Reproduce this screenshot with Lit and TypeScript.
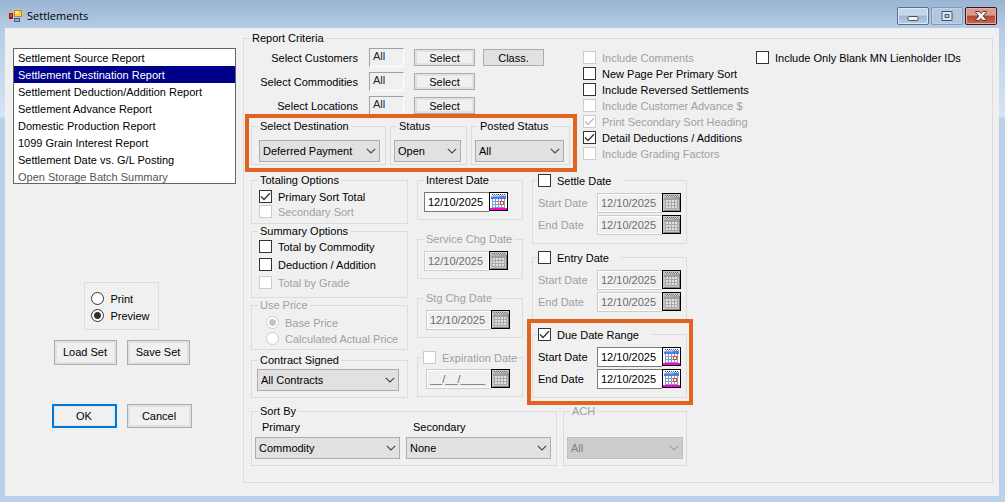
import { LitElement, html, css, svg, nothing } from "lit";
import { customElement, state } from "lit/decorators.js";
import { classMap } from "lit/directives/class-map.js";

interface Option {
  label: string;
  checked?: boolean;
  disabled?: boolean;
}

const REPORTS = [
  "Settlement Source Report",
  "Settlement Destination Report",
  "Settlement Deduction/Addition Report",
  "Settlement Advance Report",
  "Domestic Production Report",
  "1099 Grain Interest Report",
  "Settlement Date vs. G/L Posting",
  "Open Storage Batch Summary",
];

const FLAGS: Option[] = [
  { label: "Include Comments", disabled: true },
  { label: "New Page Per Primary Sort" },
  { label: "Include Reversed Settlements" },
  { label: "Include Customer Advance $", disabled: true },
  { label: "Print Secondary Sort Heading", checked: true, disabled: true },
  { label: "Detail Deductions / Additions", checked: true },
  { label: "Include Grading Factors", disabled: true },
];

const TODAY = "12/10/2025";

@customElement("app-root")
export class AppRoot extends LitElement {
  @state() private report = REPORTS[1];

  static styles = css`
    :host {
      display: block;
      font: 11px/13px "Liberation Sans", Arial, sans-serif;
      color: #000;
    }
    *,
    *::before,
    *::after {
      box-sizing: border-box;
    }
    button,
    input,
    select {
      font: inherit;
      color: inherit;
      margin: 0;
      border-radius: 0;
    }
    .window {
      min-height: 100vh;
      display: flex;
      flex-direction: column;
      padding: 0 6px 6px 5px;
      background: linear-gradient(#99b4d1 0, #b4cce6 28px, #d6e4f3 116px, #b9d1ea 119px);
    }
    .titlebar {
      height: 28px;
      display: flex;
      align-items: center;
      gap: 4px;
      padding: 4px 2px 0 4px;
    }
    .titlebar h1 {
      flex: 1;
      margin: 0;
      font: 11px/16px "Open Sans", "Noto Sans", sans-serif;
    }
    .titlebar svg {
      display: block;
    }
    .caption-buttons {
      display: flex;
      gap: 2px;
    }
    .caption {
      width: 32px;
      height: 18px;
      padding: 0;
      display: grid;
      place-items: center;
      border: 1px solid #57708c;
      border-radius: 2px;
      background: linear-gradient(#c3d6ea 45%, #9db8d4 50%, #b5cde6);
      box-shadow: inset 0 0 0 1px #dce9f6;
    }
    .caption.dim {
      border-color: #8199b5;
      background: #b0c7e0;
      box-shadow: inset 0 0 0 1px #c0d3e8;
    }
    .caption.close {
      border-color: #43131b;
      background: linear-gradient(#d99a8c 45%, #b8432c 50%, #cb6a4f);
      box-shadow: inset 0 0 0 1px #e3b1a6;
    }
    .client {
      flex: 1;
      display: grid;
      grid-template-columns: 223px 1fr;
      align-items: start;
      gap: 7px;
      padding: 4px 6px 12px 8px;
      background: #f0f0f0;
    }
    .side {
      display: flex;
      flex-direction: column;
      align-items: center;
      padding: 16px 6px 0 0;
    }
    .reports {
      width: 223px;
      height: 136px;
      align-self: flex-start;
      padding: 0;
      border: 1px solid #646464;
      background: #fff;
      overflow: hidden;
      outline: none;
      scrollbar-width: none;
    }
    .reports option {
      height: 17px;
      padding: 3px 4px 0;
    }
    .reports option:last-child {
      color: #555;
    }
    .reports option:checked {
      color: #fff;
      background: #00008b linear-gradient(#00008b, #00008b);
    }
    .output {
      margin-top: 98px;
    }
    .output .body {
      display: flex;
      flex-direction: column;
      gap: 4px;
      padding: 9px 8px 7px 6px;
    }
    .pair {
      display: flex;
      gap: 10px;
    }
    .pair.sets {
      margin-top: 10px;
    }
    .pair.confirm {
      margin-top: 39px;
    }
    .push {
      padding: 0;
      width: 61px;
      height: 17px;
      border: 1px solid #adadad;
      background: #f0f0f0;
      box-shadow: inset 0 0 0 2px #e1e1e1;
      text-align: center;
    }
    .picker .push {
      padding-top: 2px;
    }
    .push.flat {
      background: #e1e1e1;
    }
    .sets .push {
      width: 63px;
      height: 25px;
    }
    .confirm .push {
      width: 65px;
      height: 24px;
    }
    .push.default {
      border: 2px solid #0078d7;
      box-shadow: inset 0 0 0 1px #e6e6e6;
    }

    fieldset {
      min-width: 0;
      margin: 0;
      padding: 0;
      border: 1px solid #dcdcdc;
    }
    legend {
      margin-left: 6px;
      padding: 0 2px;
    }
    legend.toggle {
      margin-left: 5px;
      padding: 0 12px 0 0;
    }
    .charges legend.toggle {
      padding: 0;
    }
    fieldset:disabled,
    .off {
      color: #a0a0a0;
    }
    .criteria > .body {
      padding: 3px 7px 16px;
    }
    .upper {
      display: flex;
      gap: 13px;
    }
    .pickers {
      display: flex;
      flex-direction: column;
      gap: 5px;
    }
    .picker {
      display: flex;
      align-items: center;
      height: 19px;
    }
    .picker-name {
      width: 107px;
      margin-right: 11px;
      padding-top: 2px;
      text-align: right;
    }
    .picker output {
      width: 35px;
      height: 19px;
      margin-right: 10px;
      padding: 1px 3px;
      border: 1px solid;
      border-color: #a0a0a0 #fff #fff #a0a0a0;
      color: #1c1c3c;
    }
    .picker .push + .push {
      margin-left: 8px;
    }
    .highlight {
      position: relative;
    }
    .highlight::after {
      content: "";
      position: absolute;
      inset: -6px -7px -7px -6px;
      border: 4px solid #e06420;
      pointer-events: none;
    }
    .highlight.due::after {
      inset: -9px -6px -7px -5px;
    }
    .filters {
      display: grid;
      grid-template-columns: 135px 77px 99px;
      gap: 4px;
    }
    .filters .body {
      padding: 7px 5px 2px 3px;
    }
    .filters fieldset:first-child .body {
      padding-left: 7px;
    }
    .flags {
      display: flex;
      flex-direction: column;
      gap: 3px;
      width: 160px;
      padding-top: 3px;
    }
    .flags.wide {
      width: auto;
    }
    .option {
      display: flex;
      align-items: flex-start;
      gap: 6px;
      height: 13px;
      line-height: 15px;
      white-space: nowrap;
    }
    .option input {
      appearance: none;
      flex: none;
      width: 13px;
      height: 13px;
      border: 1px solid #333;
      background: #fff center / 11px 11px no-repeat;
    }
    .option input[type="radio"] {
      border-radius: 50%;
    }
    .option input[type="checkbox"]:checked {
      background-image: url("data:image/svg+xml,%3Csvg xmlns='http://www.w3.org/2000/svg' viewBox='0 0 11 11'%3E%3Cpath d='M1 5.5l3 3L10 2.2' fill='none' stroke='%23333' stroke-width='1.3'/%3E%3C/svg%3E");
    }
    .option input[type="radio"]:checked {
      background-image: radial-gradient(circle, #333 3px, transparent 4px);
    }
    .option input:disabled {
      border-color: #ccc;
    }
    .option input[type="checkbox"]:checked:disabled {
      background-image: url("data:image/svg+xml,%3Csvg xmlns='http://www.w3.org/2000/svg' viewBox='0 0 11 11'%3E%3Cpath d='M1 5.5l3 3L10 2.2' fill='none' stroke='%23bbb' stroke-width='1.3'/%3E%3C/svg%3E");
    }
    .option input[type="radio"]:checked:disabled {
      background-image: radial-gradient(circle, #c4c4c4 3px, transparent 4px);
    }
    .drop {
      appearance: none;
      display: block;
      width: 100%;
      height: 22px;
      padding: 0 20px 0 3px;
      border: 1px solid #adadad;
      background: #e1e1e1
        url("data:image/svg+xml,%3Csvg xmlns='http://www.w3.org/2000/svg' viewBox='0 0 10 6'%3E%3Cpath d='M.8.8L5 5 9.200.8' fill='none' stroke='%23444' stroke-width='1.1'/%3E%3C/svg%3E")
        right 3px center / 10px 6px no-repeat;
    }
    .drop:disabled {
      opacity: 1;
      border-color: #bfbfbf;
      color: #808080;
      background-color: #ccc;
      background-image: url("data:image/svg+xml,%3Csvg xmlns='http://www.w3.org/2000/svg' viewBox='0 0 10 6'%3E%3Cpath d='M.8.8L5 5 9.200.8' fill='none' stroke='%23a0a0a0' stroke-width='1.1'/%3E%3C/svg%3E");
    }
    .columns {
      display: grid;
      grid-template-columns: 157px 106px 155px;
      gap: 9px;
      margin-top: 9px;
    }
    .column {
      display: flex;
      flex-direction: column;
    }
    .column.options {
      gap: 1px;
    }
    .column.charges {
      gap: 13px;
    }
    .column.ranges {
      gap: 7px;
    }
    .stack {
      display: flex;
      flex-direction: column;
      padding-left: 7px;
    }
    .totaling .stack {
      gap: 2px;
      padding-top: 3px;
      padding-bottom: 5px;
    }
    .summary .stack {
      gap: 5px;
      padding-top: 2px;
      padding-bottom: 8px;
    }
    .price .stack {
      gap: 3px;
      padding: 4px 0 4px 14px;
    }
    .contract {
      margin-top: 3px;
    }
    .contract .body {
      padding: 2px 8px 6px 5px;
    }
    .charges .body {
      padding: 5px 0 7px 6px;
    }
    .charges .inset .body {
      padding-left: 8px;
    }
    .ranges .body {
      padding: 6px 5px 8px;
    }
    .range {
      display: flex;
      align-items: center;
      justify-content: space-between;
    }
    .range + .range {
      margin-top: 2px;
    }
    .date {
      display: flex;
      align-items: flex-start;
    }
    .date input {
      width: 65px;
      height: 20px;
      padding: 0 0 0 3px;
      border: 1px solid #7a7a7a;
      border-right: 0;
      background: #fff;
      outline: none;
    }
    .date input:disabled {
      border-color: #ccc;
      background: #f0f0f0;
      box-shadow: inset 0 0 0 1px #fff;
      color: #6d6d6d;
    }
    .calendar {
      width: 19px;
      height: 19px;
      padding: 0;
      border: 1px solid #000;
      background: none;
    }
    .calendar svg {
      display: block;
    }
    .lower {
      display: grid;
      grid-template-columns: 306px 124px;
      gap: 6px;
      margin-top: 7px;
    }
    .sort-fields {
      display: grid;
      grid-template-columns: 1fr 1fr;
      gap: 6px;
      padding: 3px 5px 6px 3px;
    }
    .sort-fields label {
      display: block;
      padding: 0 0 3px 7px;
    }
    .ach .body {
      padding: 19px 3px 6px;
    }
  `;

  private option({ label, checked, disabled }: Option, type = "checkbox", name = "") {
    return html`<label class=${classMap({ option: true, off: !!disabled })}>
      <input type=${type} name=${name || nothing} .checked=${!!checked} ?disabled=${disabled} />${label}
    </label>`;
  }

  private drop(id: string, label: string, value: string, disabled = false) {
    return html`<select class="drop" id=${id} aria-label=${label} ?disabled=${disabled}>
      <option>${value}</option>
    </select>`;
  }

  private calendarIcon(off: boolean) {
    const line = off ? "#a8a8a8" : "#7d9ccc";
    const head = off ? "#a0a0a0" : "#4a80e0";
    return svg`<svg width="17" height="17" viewBox="0 0 17 17" shape-rendering="crispEdges" aria-hidden="true">
      <path fill=${off ? "#c6c6c6" : "#fff"} d="M0 0h17v17H0z"/>
      <path stroke=${off ? "#707070" : "#444"} stroke-dasharray="1 1" d="M2 1.500h14"/>
      <path stroke=${off ? "#909090" : "#8a94a8"} stroke-dasharray="1 1" d="M3 2.500h13"/>
      <path fill=${head} d="M1 3h15v3H1z"/>
      <path fill=${off ? "#b4b4b4" : "#86aef4"} d="M1 3h9v1H1z"/>
      <path fill=${off ? "#e2e2e2" : "#fff"} d="M2 6h13v8H2z"/>
      <path fill="none" stroke=${line} d="M2.500 6v9M5.500 6v9M8.500 6v9M11.500 6v9M14.500 6v9M2 8.500h13M2 11.500h13M2 14.500h13"/>
      ${off
        ? svg`<path fill="#808080" d="M1 16h16v1H1zM16 3h1v14h-1z"/>`
        : svg`<path fill="#fff" stroke="#e84a1c" d="M10.500 8.500h3v3h-3z"/><path fill="#f0c" d="M0 15h17v2H0z"/>`}
    </svg>`;
  }

  private date(label: string, { id = "", value = TODAY, off = false } = {}) {
    return html`<div class="date">
      <input type="text" id=${id || nothing} aria-label=${label} .value=${value} ?disabled=${off} />
      <button class="calendar" aria-label="Choose ${label}" ?disabled=${off}>${this.calendarIcon(off)}</button>
    </div>`;
  }

  private range(title: string, id: string, active: boolean) {
    const off = !active;
    return html`<div class=${classMap({ highlight: active, due: active })}>
      <fieldset>
        <legend class="toggle">${this.option({ label: title, checked: active })}</legend>
        <div class="body">
          <div class=${classMap({ range: true, off })}>
            <label for="${id}-start">Start Date</label>${this.date(`${title} start`, { id: `${id}-start`, off })}
          </div>
          <div class=${classMap({ range: true, off })}>
            <label for="${id}-end">End Date</label>${this.date(`${title} end`, { id: `${id}-end`, off })}
          </div>
        </div>
      </fieldset>
    </div>`;
  }

  private picker(name: string, withClass = false) {
    return html`<div class="picker">
      <span class="picker-name">${name}</span>
      <output aria-label=${name}>All</output>
      <button class="push">Select</button>
      ${withClass ? html`<button class="push flat">Class.</button>` : nothing}
    </div>`;
  }

  private titlebar() {
    return html`<header class="titlebar">
      <svg width="14" height="14" viewBox="0 0 14 14" aria-hidden="true">
        <path fill="none" stroke="#c9c4bc" d="M.5 3.500h4v7h-4zM4.500.5h9v13h-9z" />
        <path fill="#a01414" d="M0 4h4v6H0z" />
        <path fill="#e04a3a" d="M1 5h2v3H1z" />
        <path fill="#b98510" d="M5 1h8v7H5z" />
        <path fill="#ffd040" d="M6 2h6v5H6z" />
        <path fill="#ffee9a" d="M6 2h3v3H6z" />
        <path fill="#2a62c8" d="M5 9h6v4H5z" />
        <path fill="#78b0ff" d="M6 10h4v2H6z" />
      </svg>
      <h1>Settlements</h1>
      <div class="caption-buttons">
        <button class="caption" aria-label="Minimize">
          <svg width="12" height="12" viewBox="0 0 12 12">
            <rect x="1" y="6.500" width="10" height="4" rx="1" fill="#f4f4f4" stroke="#4a5363" />
          </svg>
        </button>
        <button class="caption dim" aria-label="Maximize">
          <svg width="12" height="10" viewBox="0 0 12 10">
            <path fill="#dfe6ee" stroke="#4a5363" d="M1 .5h10v9H1zM4 3.500h4v3H4z" fill-rule="evenodd" />
          </svg>
        </button>
        <button class="caption close" aria-label="Close">
          <svg width="12" height="10" viewBox="0 0 12 10">
            <path
              fill="#f6f6f6"
              stroke="#47393f"
              d="M.8.5h3.400L6 2.600 7.800.5h3.400v1L8.200 5l3 3.500v1H7.800L6 7.400 4.200 9.500H.8v-1l3-3.500-3-3.500z"
            />
          </svg>
        </button>
      </div>
    </header>`;
  }

  private sidePanel() {
    return html`<div class="side">
      <select
        class="reports"
        size="8"
        aria-label="Report"
        @change=${(e: Event) => (this.report = (e.target as HTMLSelectElement).value)}
      >
        ${REPORTS.map((r) => html`<option ?selected=${r === this.report}>${r}</option>`)}
      </select>
      <fieldset class="output" aria-label="Output">
        <div class="body">
          ${this.option({ label: "Print" }, "radio", "output")}
          ${this.option({ label: "Preview", checked: true }, "radio", "output")}
        </div>
      </fieldset>
      <div class="pair sets">
        <button class="push">Load Set</button>
        <button class="push">Save Set</button>
      </div>
      <div class="pair confirm">
        <button class="push default">OK</button>
        <button class="push">Cancel</button>
      </div>
    </div>`;
  }

  render() {
    return html`<div class="window">
      ${this.titlebar()}
      <main class="client">
        ${this.sidePanel()}
        <fieldset class="criteria">
          <legend>Report Criteria</legend>
          <div class="body">
            <div class="upper">
              <div class="pickers">
                ${this.picker("Select Customers", true)} ${this.picker("Select Commodities")}
                ${this.picker("Select Locations")}
                <div class="filters highlight">
                  <fieldset>
                    <legend>Select Destination</legend>
                    <div class="body">${this.drop("destination", "Select Destination", "Deferred Payment")}</div>
                  </fieldset>
                  <fieldset>
                    <legend>Status</legend>
                    <div class="body">${this.drop("status", "Status", "Open")}</div>
                  </fieldset>
                  <fieldset>
                    <legend>Posted Status</legend>
                    <div class="body">${this.drop("posted", "Posted Status", "All")}</div>
                  </fieldset>
                </div>
              </div>
              <div class="flags">${FLAGS.map((f) => this.option(f))}</div>
              <div class="flags wide">${this.option({ label: "Include Only Blank MN Lienholder IDs" })}</div>
            </div>

            <div class="columns">
              <div class="column options">
                <fieldset class="totaling">
                  <legend>Totaling Options</legend>
                  <div class="stack">
                    ${this.option({ label: "Primary Sort Total", checked: true })}
                    ${this.option({ label: "Secondary Sort", disabled: true })}
                  </div>
                </fieldset>
                <fieldset class="summary">
                  <legend>Summary Options</legend>
                  <div class="stack">
                    ${this.option({ label: "Total by Commodity" })} ${this.option({ label: "Deduction / Addition" })}
                    ${this.option({ label: "Total by Grade", disabled: true })}
                  </div>
                </fieldset>
                <fieldset class="price" disabled>
                  <legend>Use Price</legend>
                  <div class="stack">
                    ${this.option({ label: "Base Price", checked: true, disabled: true }, "radio", "price")}
                    ${this.option({ label: "Calculated Actual Price", disabled: true }, "radio", "price")}
                  </div>
                </fieldset>
                <fieldset class="contract">
                  <legend>Contract Signed</legend>
                  <div class="body">${this.drop("contract", "Contract Signed", "All Contracts")}</div>
                </fieldset>
              </div>

              <div class="column charges">
                <fieldset>
                  <legend>Interest Date</legend>
                  <div class="body">${this.date("Interest Date")}</div>
                </fieldset>
                <fieldset disabled>
                  <legend>Service Chg Date</legend>
                  <div class="body">${this.date("Service Chg Date", { off: true })}</div>
                </fieldset>
                <fieldset class="inset" disabled>
                  <legend>Stg Chg Date</legend>
                  <div class="body">${this.date("Stg Chg Date", { off: true })}</div>
                </fieldset>
                <fieldset class="inset" disabled>
                  <legend class="toggle">${this.option({ label: "Expiration Date", disabled: true })}</legend>
                  <div class="body">${this.date("Expiration Date", { value: "__/__/____", off: true })}</div>
                </fieldset>
              </div>

              <div class="column ranges">
                ${this.range("Settle Date", "settle", false)} ${this.range("Entry Date", "entry", false)}
                ${this.range("Due Date Range", "due", true)}
              </div>
            </div>

            <div class="lower">
              <fieldset>
                <legend>Sort By</legend>
                <div class="sort-fields">
                  <div>
                    <label for="primary">Primary</label>
                    ${this.drop("primary", "Primary", "Commodity")}
                  </div>
                  <div>
                    <label for="secondary">Secondary</label>
                    ${this.drop("secondary", "Secondary", "None")}
                  </div>
                </div>
              </fieldset>
              <fieldset class="ach" disabled>
                <legend>ACH</legend>
                <div class="body">${this.drop("ach", "ACH", "All", true)}</div>
              </fieldset>
            </div>
          </div>
        </fieldset>
      </main>
    </div>`;
  }
}
